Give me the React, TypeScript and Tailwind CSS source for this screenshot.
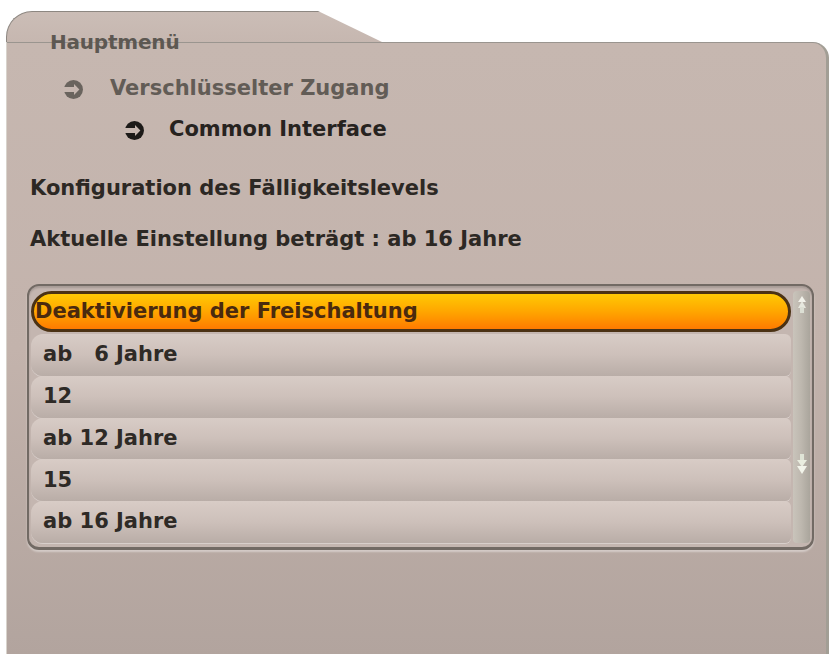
import React from 'react';

const rows = ['ab   6 Jahre', '12', 'ab 12 Jahre', '15', 'ab 16 Jahre'];

function ArrowDot({ color, bg }: { color: string; bg: string }) {
  return (
    <svg width="21" height="21" viewBox="0 0 20 20" className="shrink-0">
      <circle cx="10" cy="10" r="9" fill={color} />
      <path d="M0 7.6H10.5V4.8L15.6 10L10.5 15.2V12.4H0Z" fill={bg} />
    </svg>
  );
}

const txt = 'text-[21px] font-bold tracking-[0px] whitespace-pre';

export default function App() {
  return (
    <div
      className="w-[831px] h-[654px] bg-white pt-[11px] pl-[6px] pr-[2px] overflow-hidden"
      style={{ fontFamily: '"DejaVu Sans", "Open Sans", sans-serif' }}
    >
      {/* tab */}
      <div className="flex">
        <div className="w-[376px] h-[31px] bg-gradient-to-b from-[#cbbdb6] to-[#c6b7b0] rounded-tl-[26px] border-t border-l border-[#8d8781] [clip-path:polygon(0_0,312px_0,376px_100%,0_100%)]" />
      </div>

      {/* main panel */}
      <div className="h-[612px] bg-gradient-to-b from-[#c6b7b0] via-[#c3b3ac] to-[#b2a49e] rounded-tr-[16px] border-t border-[#9a958f] border-r-[3px] border-r-[#a29e95] border-l border-l-[#d8d3cc] flex flex-col">
        <div className="relative z-10 -mt-[13px] h-[24px] leading-[24px] pl-[43px] text-[20px] font-bold text-[#5d5852] tracking-[-0.2px]">
          Hauptmenü
        </div>
        <div className="flex items-center gap-[26px] pl-[56px] h-[24px] mt-[23px]">
          <ArrowDot color="#6a645e" bg="#c6b7b0" />
          <span className={`${txt} text-[#625c56] tracking-[-0.3px]`}>Verschlüsselter Zugang</span>
        </div>
        <div className="flex items-center gap-[24px] pl-[117px] h-[24px] mt-[17px]">
          <ArrowDot color="#1c1a18" bg="#c6b7b0" />
          <span className={`${txt} text-[#27231f]`}>Common Interface</span>
        </div>

        <div className={`pl-[23px] mt-[34px] leading-[24px] text-[#2c2824] ${txt}`}>
          Konfiguration des Fälligkeitslevels
        </div>
        <div className={`pl-[23px] mt-[27px] leading-[24px] text-[#2c2824] ${txt}`}>
          Aktuelle Einstellung beträgt : ab 16 Jahre
        </div>

        {/* list box */}
        <div className="ml-[20px] mr-[12px] mt-[33px] h-[266px] rounded-[12px] border-2 border-[#726a64] border-b-[3px] bg-[#c4b6b0] shadow-[inset_0_2px_2px_rgba(0,0,0,0.15),0_2px_2px_rgba(255,255,255,0.4)] flex pl-[2px] pt-[5px] pb-[4px]">
          <div className="flex-1 flex flex-col">
            <div className="h-[41px] rounded-full border-[3px] border-[#4b3214] bg-gradient-to-b from-[#ffc904] via-[#ffa600] to-[#ff7a00] flex items-center pl-[1px] mb-[2px]">
              <span className={`${txt} text-[#4a2a0e]`}>Deaktivierung der Freischaltung</span>
            </div>
            {rows.map((r) => (
              <div
                key={r}
                className="h-[42px] rounded-l-[12px] rounded-r-[6px] bg-gradient-to-b from-[#d8ccc6] via-[#cdc0ba] to-[#b9ada7] flex items-center pl-[12px] shadow-[0_1px_0_rgba(255,255,255,0.35)]"
              >
                <span className={`${txt} text-[#2e2a26]`}>{r}</span>
              </div>
            ))}
          </div>

          {/* scrollbar */}
          <div className="w-[17px] ml-[2px] mr-[2px] flex flex-col items-center rounded-[4px] bg-gradient-to-r from-[#c9c4bb] via-[#bdb7ae] to-[#aaa59c]">
            <svg width="10" height="22" viewBox="0 0 10 22" className="mt-[4px]">
              <path d="M5 1L9 7H1Z" fill="#f2f2ea" />
              <path d="M5 6L9 13H1Z" fill="#e6e8de" />
              <rect x="3" y="12" width="4" height="6" fill="#dcdfd4" />
            </svg>
            <div className="flex-1" />
            <svg width="12" height="24" viewBox="0 0 12 24" className="mb-[66px]">
              <rect x="4" y="1" width="4" height="6" fill="#dfe4d6" />
              <path d="M1 7H11L6 14Z" fill="#e9eddf" />
              <path d="M1 13H11L6 21Z" fill="#f2f4ea" />
            </svg>
          </div>
        </div>
      </div>
    </div>
  );
}
